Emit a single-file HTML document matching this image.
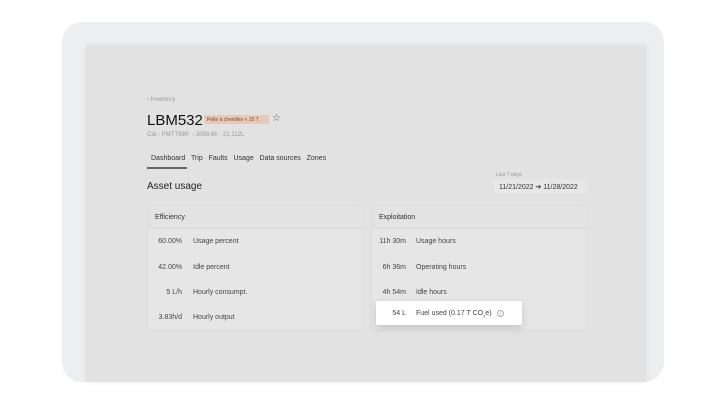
<!DOCTYPE html>
<html><head><meta charset="utf-8"><style>
*{margin:0;padding:0;box-sizing:border-box}
body{width:718px;height:404px;background:#fff;font-family:"Liberation Sans",sans-serif;position:relative;overflow:hidden;color:#333}
.outer{position:absolute;left:62px;top:22px;width:602px;height:360px;background:#eceef0;border-radius:20px}
.panel{position:absolute;left:86px;top:46px;width:560px;height:336px;background:#e2e2e2;box-shadow:0 0 6px rgba(0,0,0,.08)}
.a{position:absolute;white-space:nowrap}
.card{position:absolute;top:206px;width:214px;height:123px;background:#e6e6e6;border-radius:3px;box-shadow:0 0 2px rgba(0,0,0,.05)}
.card .h{height:23px;background:#e3e3e3;border-bottom:1px solid #dadada;font-size:7px;padding:8px 7px;color:#333}
.row{position:absolute;font-size:7px;color:#444}
.v{position:absolute;text-align:right;width:34px}
</style></head><body>
<div class="outer"></div>
<div class="panel"></div>
<div class="a" style="left:147px;top:97px;font-size:6px;color:#999">‹ Inventory</div>
<div class="a" style="left:147px;top:112px;font-size:15px;color:#111">LBM532</div>
<div class="a" style="left:204px;top:115px;width:65px;height:9px;background:#e8c9b8;border-radius:2px;font-size:5px;color:#7a4a35;padding:1.5px 3px">Pelle à chenilles &lt; 25 T</div>
<div class="a" style="left:272px;top:113px;font-size:10px;color:#555">☆</div>
<div class="a" style="left:147px;top:132px;font-size:6px;color:#999">Cat - PMTT98R &nbsp;- 3098.6h - 21,112L</div>
<div class="a" style="left:151px;top:155px;font-size:7px;color:#333">Dashboard&nbsp;&nbsp; Trip&nbsp;&nbsp; Faults&nbsp;&nbsp; Usage&nbsp;&nbsp; Data sources&nbsp;&nbsp; Zones</div>
<div class="a" style="left:147px;top:167px;width:40px;height:2px;background:#666"></div>
<div class="a" style="left:147px;top:181px;font-size:10px;color:#222">Asset usage</div>
<div class="a" style="left:496px;top:172px;font-size:5px;color:#999">Last 7 days</div>
<div class="a" style="left:494px;top:179px;width:93px;height:15px;background:#e7e7e7;font-size:7px;color:#333;padding:4px 5px">11/21/2022 ➔ 11/28/2022</div>
<div class="card" style="left:148px"><div class="h">Efficiency</div></div>
<div class="card" style="left:372px"><div class="h">Exploitation</div></div>
<div class="row" style="left:148px;top:238px"><span class="v" style="left:0">60.00%</span><span class="a" style="left:45px">Usage percent</span></div>
<div class="row" style="left:148px;top:264px"><span class="v" style="left:0">42.00%</span><span class="a" style="left:45px">Idle percent</span></div>
<div class="row" style="left:148px;top:289px"><span class="v" style="left:0">5 L/h</span><span class="a" style="left:45px">Hourly consumpt.</span></div>
<div class="row" style="left:148px;top:314px"><span class="v" style="left:0">3.83h/d</span><span class="a" style="left:45px">Hourly output</span></div>
<div class="row" style="left:372px;top:238px"><span class="v" style="left:0">11h 30m</span><span class="a" style="left:44px">Usage hours</span></div>
<div class="row" style="left:372px;top:264px"><span class="v" style="left:0">6h 36m</span><span class="a" style="left:44px">Operating hours</span></div>
<div class="row" style="left:372px;top:289px"><span class="v" style="left:0">4h 54m</span><span class="a" style="left:44px">Idle hours</span></div>
<div class="a" style="left:376px;top:301px;width:146px;height:24px;background:#fff;border-radius:2px;box-shadow:0 3px 8px rgba(0,0,0,.15)"></div>
<div class="row" style="left:372px;top:310px"><span class="v" style="left:0">54 L</span><span class="a" style="left:44px">Fuel used (0.17 T CO<sub style="font-size:4px">2</sub>e)</span><span class="a" style="left:125px;top:0;width:7px;height:7px;border:0.7px solid #aaa;border-radius:50%;font-size:5px;text-align:center;line-height:6px;color:#aaa">i</span></div>
</body></html>
